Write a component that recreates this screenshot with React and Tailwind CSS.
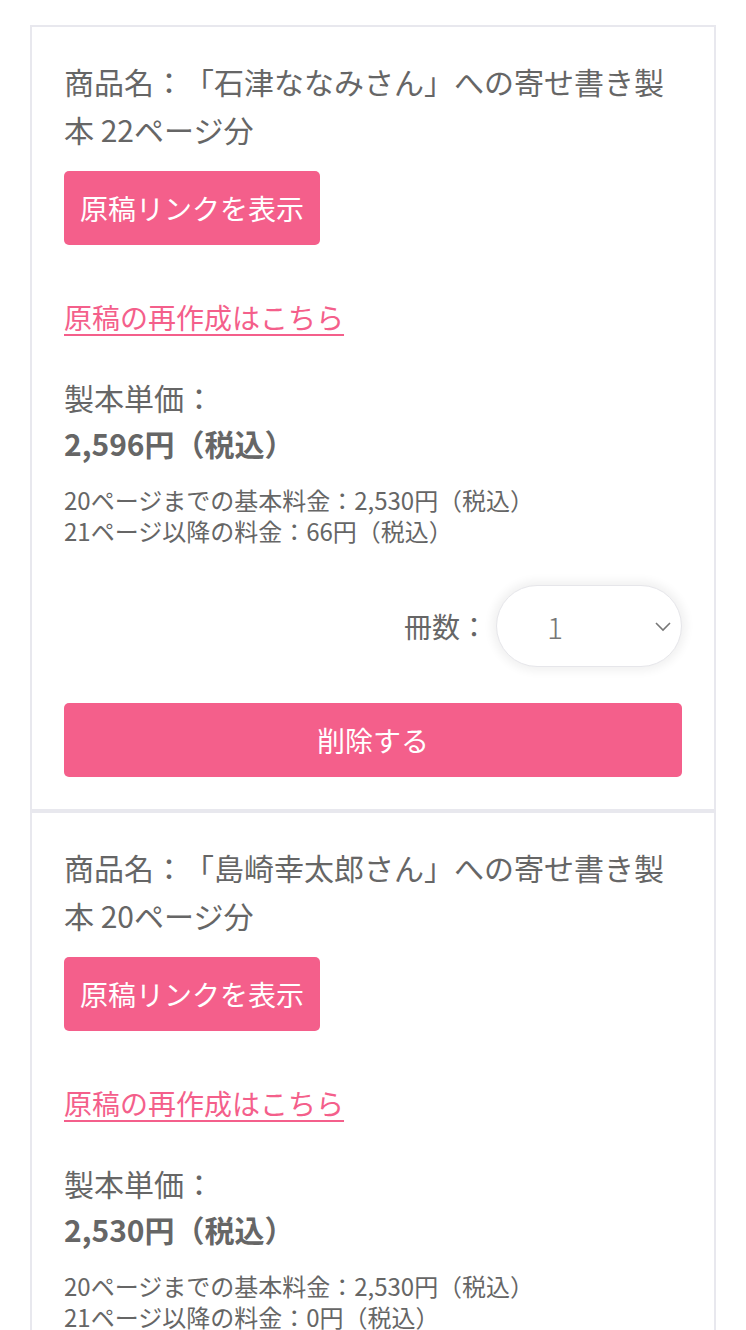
import React from "react";

const items = [
  { name: "「石津ななみさん」への寄せ書き製本 22ページ分", price: "2,596", base: "2,530", extra: "66" },
  { name: "「島崎幸太郎さん」への寄せ書き製本 20ページ分", price: "2,530", base: "2,530", extra: "0" },
];

const CartItem = ({ item }) => (
  <div className="border-2 border-[#e8e8ee] px-[32px] pt-[32px] pb-[32px] bg-white">
    <p className="text-[30px] leading-[48px] text-[#666] [text-spacing-trim:space-all] -mt-[2px] pb-[2px]">
      商品名：{item.name}
    </p>
    <button className="mt-[16px] h-[74px] px-[16px] rounded-[5px] bg-[#f45f8b] text-white text-[28px]">
      原稿リンクを表示
    </button>
    <div className="mt-[48px] leading-[48px]">
      <a href="#" className="text-[28px] text-[#f45f8b] underline underline-offset-[5px] decoration-[2px]">
        原稿の再作成はこちら
      </a>
    </div>
    <p className="mt-[27px] text-[30px] leading-[48px] text-[#666] [text-spacing-trim:space-all]">製本単価：</p>
    <p className="text-[30px] leading-[44px] font-bold text-[#666] [text-spacing-trim:space-all]">{item.price}円（税込）</p>
    <div className="mt-[19px] text-[24px] leading-[31px] text-[#666] [text-spacing-trim:space-all]">
      <p>20ページまでの基本料金：{item.base}円（税込）</p>
      <p>21ページ以降の料金：{item.extra}円（税込）</p>
    </div>
    <div className="mt-[39px] flex items-center justify-end gap-[8px]">
      <span className="text-[28px] text-[#666] [text-spacing-trim:space-all]">冊数：</span>
      <div className="relative w-[186px] h-[82px] rounded-full bg-white border border-[#e6e6ea] shadow-[0_0_10px_4px_rgba(0,0,0,0.06)] flex items-center pl-[50px]">
        <span className="text-[30px] font-light text-[#777]">1</span>
        <svg className="absolute right-[9px] top-1/2 -translate-y-1/2" width="18" height="12" viewBox="0 0 18 12" fill="none">
          <path d="M2 3l7 7 7-7" stroke="#777" strokeWidth="1.6" />
        </svg>
      </div>
    </div>
    <button className="mt-[36px] w-full h-[74px] rounded-[5px] bg-[#f45f8b] text-white text-[28px]">
      削除する
    </button>
  </div>
);

export default function App() {
  return (
    <div
      className="min-h-[1330px] bg-white px-[30px] pt-[25px]"
      style={{ fontFamily: '"Noto Sans CJK JP", "Noto Sans", sans-serif' }}
    >
      <div className="flex flex-col">
        {items.map((item, i) => (
          <CartItem key={i} item={item} />
        ))}
      </div>
    </div>
  );
}
